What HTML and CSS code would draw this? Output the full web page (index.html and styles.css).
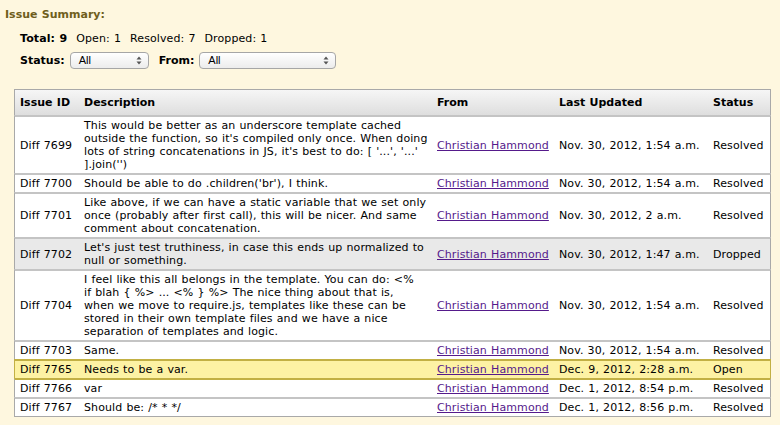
FILE: index.html
```html
<!DOCTYPE html>
<html>
<head>
<meta charset="utf-8">
<link rel="stylesheet" href="styles.css">
</head>
<body>
<div class="page">
  <h1 class="title">Issue Summary:</h1>
  <div class="summary">
    <div class="totals"><b class="stat">Total: 9</b><span class="stat">Open: 1</span><span class="stat">Resolved: 7</span><span class="stat">Dropped: 1</span></div>
    <div class="filters">
      <span class="flabel">Status:</span>
      <div class="select sel-status"><span>All</span><svg class="arrows" width="6" height="9" viewBox="0 0 6 9"><path d="M0.5 3.5 L3 0.5 L5.5 3.5 Z M0.5 5.5 L3 8.5 L5.5 5.5 Z" fill="#555"/></svg></div>
      <span class="flabel">From:</span>
      <div class="select sel-from"><span>All</span><svg class="arrows" width="6" height="9" viewBox="0 0 6 9"><path d="M0.5 3.5 L3 0.5 L5.5 3.5 Z M0.5 5.5 L3 8.5 L5.5 5.5 Z" fill="#555"/></svg></div>
    </div>
  </div>
  <table class="issues">
    <colgroup>
      <col class="c-id"><col class="c-desc"><col class="c-from"><col class="c-date"><col class="c-status">
    </colgroup>
    <thead>
      <tr><th>Issue ID</th><th>Description</th><th>From</th><th>Last Updated</th><th>Status</th></tr>
    </thead>
    <tbody>
      <tr><td>Diff 7699</td><td>This would be better as an underscore template cached<br>outside the function, so it's compiled only once. When doing<br>lots of string concatenations in JS, it's best to do: [ '...', '...'<br>].join('')</td><td><a href="#">Christian Hammond</a></td><td>Nov. 30, 2012, 1:54 a.m.</td><td>Resolved</td></tr>
      <tr><td>Diff 7700</td><td>Should be able to do .children('br'), I think.</td><td><a href="#">Christian Hammond</a></td><td>Nov. 30, 2012, 1:54 a.m.</td><td>Resolved</td></tr>
      <tr><td>Diff 7701</td><td>Like above, if we can have a static variable that we set only<br>once (probably after first call), this will be nicer. And same<br>comment about concatenation.</td><td><a href="#">Christian Hammond</a></td><td>Nov. 30, 2012, 2 a.m.</td><td>Resolved</td></tr>
      <tr class="dropped"><td>Diff 7702</td><td>Let's just test truthiness, in case this ends up normalized to<br>null or something.</td><td><a href="#">Christian Hammond</a></td><td>Nov. 30, 2012, 1:47 a.m.</td><td>Dropped</td></tr>
      <tr><td>Diff 7704</td><td>I feel like this all belongs in the template. You can do: &lt;%<br>if blah { %&gt; ... &lt;% } %&gt; The nice thing about that is,<br>when we move to require.js, templates like these can be<br>stored in their own template files and we have a nice<br>separation of templates and logic.</td><td><a href="#">Christian Hammond</a></td><td>Nov. 30, 2012, 1:54 a.m.</td><td>Resolved</td></tr>
      <tr><td>Diff 7703</td><td>Same.</td><td><a href="#">Christian Hammond</a></td><td>Nov. 30, 2012, 1:54 a.m.</td><td>Resolved</td></tr>
      <tr class="open"><td>Diff 7765</td><td>Needs to be a var.</td><td><a href="#">Christian Hammond</a></td><td>Dec. 9, 2012, 2:28 a.m.</td><td>Open</td></tr>
      <tr><td>Diff 7766</td><td>var</td><td><a href="#">Christian Hammond</a></td><td>Dec. 1, 2012, 8:54 p.m.</td><td>Resolved</td></tr>
      <tr><td>Diff 7767</td><td>Should be: /* * */</td><td><a href="#">Christian Hammond</a></td><td>Dec. 1, 2012, 8:56 p.m.</td><td>Resolved</td></tr>
    </tbody>
  </table>
</div>
</body>
</html>
```

FILE: styles.css
```css
html, body {
  margin: 0;
  padding: 0;
  background: #fef7df;
}
body {
  font-family: "DejaVu Sans", Verdana, sans-serif;
  font-size: 11px;
  line-height: 13px;
  color: #000;
  letter-spacing: 0.1px;
  word-spacing: 0.5px;
}
.page {
  padding: 8px 0 0 5px;
}
.title {
  margin: 0;
  font-size: 11px;
  line-height: 13px;
  font-weight: bold;
  color: #6f5e1c;
  letter-spacing: 0;
}
.summary {
  margin: 11px 0 0 15px;
}
.totals {
  display: flex;
  gap: 9px;
}
.stat {
  white-space: nowrap;
}
.filters {
  display: flex;
  align-items: center;
  margin-top: 7px;
  height: 17px;
}
.flabel {
  font-weight: bold;
  letter-spacing: 0;
  margin-right: 5px;
}
.select {
  box-sizing: border-box;
  height: 17px;
  border: 1px solid #a6a6a6;
  border-radius: 4px;
  background: linear-gradient(#ffffff, #ececec);
  display: flex;
  align-items: center;
  justify-content: space-between;
  padding: 0 6px 0 8px;
  font-family: "Liberation Sans", Arial, sans-serif;
  font-size: 11px;
  letter-spacing: 0;
}
.sel-status {
  width: 79px;
  margin-right: 10px;
}
.sel-from {
  width: 137px;
}
.issues {
  margin: 20px 0 0 9px;
  width: 757px;
  table-layout: fixed;
  border-collapse: separate;
  border-spacing: 0;
}
.c-id { width: 64px; }
.c-desc { width: 353px; }
.c-from { width: 122px; }
.c-date { width: 154px; }
.c-status { width: 64px; }
.issues th {
  text-align: left;
  font-weight: bold;
  letter-spacing: 0;
  padding: 6px 2px 6px 6px;
  background: linear-gradient(#f6f6f6, #dedede);
  border-top: 1px solid #a9a9a9;
  white-space: nowrap;
}
.issues th:first-child,
.issues td:first-child {
  padding-left: 5px;
  border-left: 1px solid #a9a9a9;
}
.issues th:last-child,
.issues td:last-child {
  border-right: 1px solid #a9a9a9;
}
.issues td {
  background: #fff;
  padding: 2px 2px 2px 6px;
  border-top: 2px solid #c4c4c4;
  vertical-align: middle;
  white-space: nowrap;
}
.issues tbody tr:last-child td {
  border-bottom: 1px solid #a9a9a9;
}
.issues tr.dropped td {
  background: #e9e9e9;
}
.issues tr.open td {
  background: #fdf2a4;
  border-top-color: #c2b044;
}
.issues tr.open td:first-child {
  border-left-color: #c2b044;
}
.issues tr.open td:last-child {
  border-right-color: #c2b044;
}
.issues tr.open + tr td {
  border-top-color: #c2b044;
}
.issues a {
  color: #551a8b;
  text-decoration: underline;
}
```
